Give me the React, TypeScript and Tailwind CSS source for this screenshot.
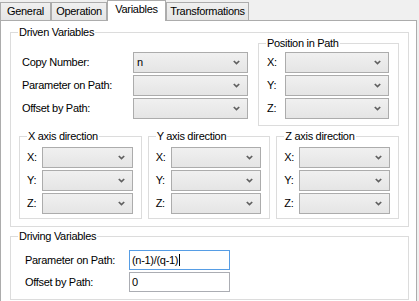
import React from "react";

function Chevron() {
  return (
    <svg width="7" height="5" viewBox="0 0 7 5" className="shrink-0">
      <path d="M0.8 1 L3.5 3.6 L6.2 1" stroke="#606060" strokeWidth="1.7" fill="none" />
    </svg>
  );
}

function Combo({ value = "", className = "" }: { value?: string; className?: string }) {
  return (
    <div
      className={
        "h-[21px] border border-[#acacac] bg-linear-to-b from-[#f0f0f0] to-[#e5e5e5] flex items-center justify-between pl-[3px] pr-[7px] " +
        className
      }
    >
      <span>{value}</span>
      <Chevron />
    </div>
  );
}

function Group({
  title,
  className = "",
  children,
}: {
  title: string;
  className?: string;
  children?: React.ReactNode;
}) {
  return (
    <div className={"relative border border-[#dcdcdc] " + className}>
      <span className="absolute left-[7px] -top-[7px] bg-white px-[1px] leading-[13px] whitespace-nowrap">
        {title}
      </span>
      {children}
    </div>
  );
}

function Tab({ label, className = "", active = false }: { label: string; className?: string; active?: boolean }) {
  if (active) {
    return (
      <div
        className={
          "h-[21px] -mb-[1px] relative z-10 bg-white border-t border-l border-r border-[#acacac] flex justify-center pt-[2px] " +
          className
        }
      >
        {label}
      </div>
    );
  }
  return (
    <div
      className={
        "h-[18px] bg-linear-to-b from-[#f0f0f0] to-[#e5e5e5] border-t border-l border-r border-[#acacac] flex justify-center pt-[2px] " +
        className
      }
    >
      {label}
    </div>
  );
}

function AxisGroup({ title }: { title: string }) {
  return (
    <Group title={title} className="pt-[10px] pl-[7px] pr-[8px] pb-[4px] flex flex-col gap-[2px]">
      {["X:", "Y:", "Z:"].map((l) => (
        <div key={l} className="flex items-center">
          <span className="w-[15px] shrink-0">{l}</span>
          <Combo className="flex-1" />
        </div>
      ))}
    </Group>
  );
}

export default function App() {
  return (
    <div className="w-[419px] h-[301px] overflow-hidden bg-[#f0f0f0] font-['Liberation_Sans',Arial,sans-serif] text-[11px] leading-[13px] tracking-[-0.3px] text-black flex flex-col">
      <div className="h-[20px] shrink-0 flex items-end">
        <Tab label="General" className="w-[51px]" />
        <Tab label="Operation" className="w-[56px]" />
        <Tab label="Variables" className="w-[59px]" active />
        <Tab label="Transformations" className="w-[83px]" />
      </div>
      <div className="w-[417px] h-[300px] shrink-0 border border-[#acacac] bg-white pt-[11px] pl-[9px] pr-[7px] flex flex-col">
        <Group title="Driven Variables" className="pt-[10px] pb-[7px] flex flex-col">
          <div className="flex justify-between pr-[9px]">
            <div className="pl-[11px] pt-[9px] flex flex-col gap-[2px]">
              {[
                ["Copy Number:", "n"],
                ["Parameter on Path:", ""],
                ["Offset by Path:", ""],
              ].map(([l, v]) => (
                <div key={l} className="flex items-center">
                  <span className="w-[111px] shrink-0">{l}</span>
                  <Combo value={v} className="w-[115px]" />
                </div>
              ))}
            </div>
            <Group title="Position in Path" className="w-[141px] pt-[8px] pl-[8px] pr-[9px] pb-[6px] flex flex-col gap-[2px]">
              {["X:", "Y:", "Z:"].map((l) => (
                <div key={l} className="flex items-center">
                  <span className="w-[18px] shrink-0">{l}</span>
                  <Combo className="flex-1" />
                </div>
              ))}
            </Group>
          </div>
          <div className="mt-[10px] pl-[8px] pr-[9px] grid grid-cols-3 gap-[6px]">
            <AxisGroup title="X axis direction" />
            <AxisGroup title="Y axis direction" />
            <AxisGroup title="Z axis direction" />
          </div>
        </Group>
        <Group title="Driving Variables" className="mt-[9px] pt-[13px] pl-[14px] pb-[7px] flex flex-col gap-[2px]">
          <div className="flex items-center">
            <span className="w-[104px] shrink-0">Parameter on Path:</span>
            <div className="w-[101px] h-[20px] border border-[#569de5] bg-white flex items-center pl-[2px]">
              <span>(n-1)/(q-1)</span>
              <span className="w-px h-[12px] bg-black ml-[1px]" />
            </div>
          </div>
          <div className="flex items-center">
            <span className="w-[104px] shrink-0">Offset by Path:</span>
            <div className="w-[101px] h-[20px] border border-[#abadb3] bg-white flex items-center pl-[2px]">
              <span>0</span>
            </div>
          </div>
        </Group>
      </div>
    </div>
  );
}
